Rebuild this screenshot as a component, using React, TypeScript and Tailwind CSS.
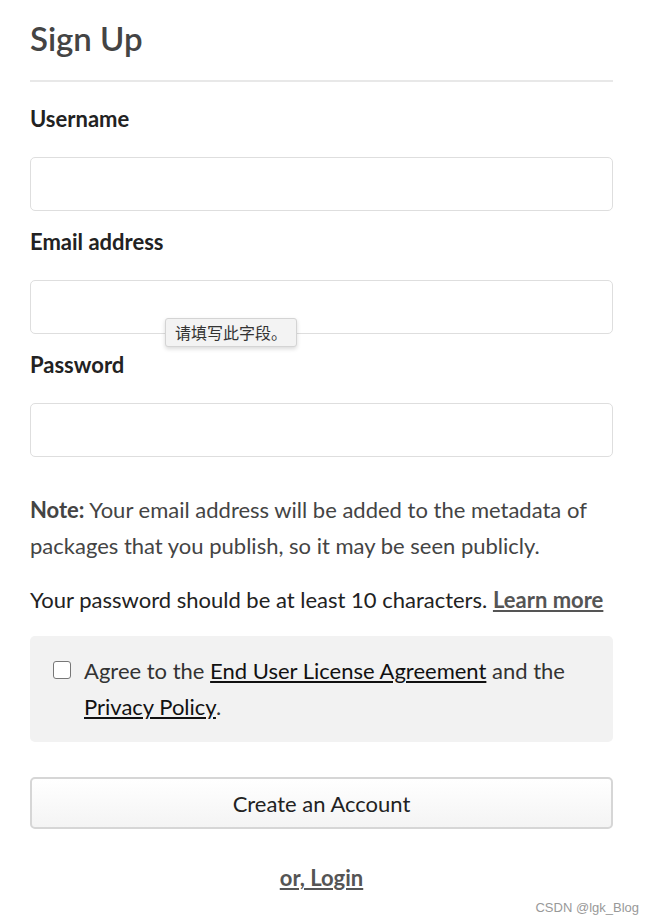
import React from "react";

const font = { fontFamily: "Lato, 'Noto Sans CJK SC', sans-serif" };

const Field = ({
  label,
  type = "text",
  first = false,
  children,
}: {
  label: string;
  type?: string;
  first?: boolean;
  children?: React.ReactNode;
}) => (
  <div>
    <label
      className={
        "block text-[22px] font-bold leading-[30px] text-[#222] mb-[23px] " +
        (first ? "mt-[22px]" : "mt-[16px]")
      }
    >
      {label}
    </label>
    <div className="relative">
      <input
        type={type}
        className="block w-full h-[54px] rounded-[5px] border border-[#dedede] bg-white px-3"
      />
      {children}
    </div>
  </div>
);

export default function App() {
  return (
    <div className="relative min-h-[922px] bg-white" style={font}>
      <div className="pl-[30px] w-[613px]">
        {/* heading */}
        <h1 className="pt-[17px] text-[33px] leading-[42px] font-semibold text-[#444] pb-[21px] border-b-2 border-[#e8e8e8]">
          Sign Up
        </h1>

        <Field label="Username" first />
        <Field label="Email address" type="email">
          {/* validation tooltip */}
          <div className="absolute z-10 left-[135px] top-[38px] px-[9px] h-[29px] flex items-center text-[16px] text-[#333] bg-[#f3f3f3] border border-[#d4d4d4] rounded-[3px] shadow-[0_2px_4px_rgba(0,0,0,0.15)]">
            请填写此字段。
          </div>
        </Field>
        <Field label="Password" type="password" />

        <p className="mt-[35px] text-[22px] leading-[36px] text-[#444]">
          <b>Note:</b> Your email address will be added to the metadata of packages that you publish, so it may be seen publicly.
        </p>
        <p className="mt-[18px] text-[22px] leading-[36px] text-[#222]">
          Your password should be at least 10 characters.{" "}
          <a className="font-bold underline text-[#555]">Learn more</a>
        </p>

        {/* terms */}
        <div className="mt-[18px] rounded-[5px] bg-[#f2f2f2] pl-[23px] pr-4 py-[17px] flex gap-[13px]">
          <input type="checkbox" className="mt-[8px] w-[18px] h-[18px] shrink-0 appearance-none rounded-[3px] border border-[#777] bg-white" />
          <p className="text-[22px] leading-[36px] text-[#333]">
            Agree to the <a className="underline text-[#111]">End User License Agreement</a> and the{" "}
            <a className="underline text-[#111]">Privacy Policy</a>.
          </p>
        </div>

        <button className="mt-[35px] w-full h-[52px] rounded-[5px] border-2 border-[#d6d6d6] bg-gradient-to-b from-white to-[#f4f4f4] text-[22px] text-[#222]">
          Create an Account
        </button>

        <div className="mt-[32px] text-center">
          <a className="text-[22px] font-bold underline text-[#555]">or, Login</a>
        </div>
      </div>

      <div className="absolute right-[11px] top-[898px] text-[13px] text-[#999]" style={{ fontFamily: "'Liberation Sans', sans-serif" }}>
        CSDN @lgk_Blog
      </div>
    </div>
  );
}
